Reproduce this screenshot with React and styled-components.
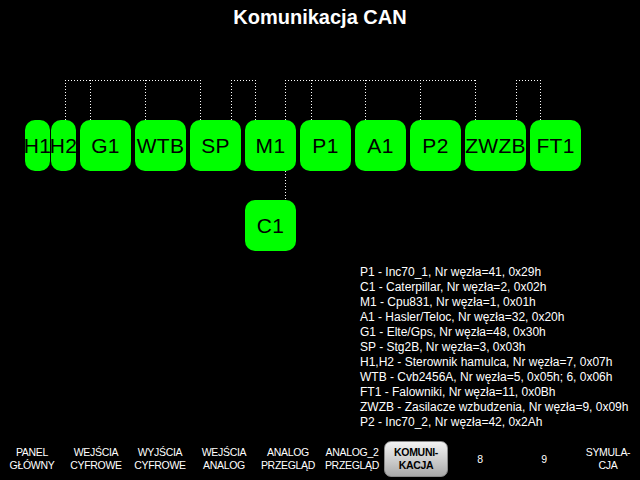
import React from "react";
import styled, { createGlobalStyle } from "styled-components";

const Global = createGlobalStyle`
  html, body { margin: 0; padding: 0; background: #000; }
  body { font-family: "Liberation Sans", Arial, sans-serif; }
`;

const Screen = styled.div`
  width: 640px;
  height: 480px;
  background: #000;
  display: flex;
  flex-direction: column;
  overflow: hidden;
`;

const Title = styled.h1`
  margin: 0;
  height: 40px;
  box-sizing: border-box;
  padding-top: 6px;
  font-size: 20px;
  line-height: 23px;
  font-weight: bold;
  color: #fff;
  text-align: center;
`;

const Diagram = styled.div`
  position: relative;
  height: 222px;
  flex: none;
`;

const Wires = styled.svg`
  position: absolute;
  left: 0;
  top: 0;
`;

const Node = styled.div`
  position: absolute;
  height: 51px;
  background: #00ff00;
  border-radius: 10px;
  display: flex;
  align-items: center;
  justify-content: center;
  color: #000;
  font-size: 21px;
  letter-spacing: 0.3px;
  white-space: nowrap;
`;

const Legend = styled.div`
  margin: 3px 0 0 360px;
  color: #fff;
  font-size: 12px;
  line-height: 15px;
`;

const Nav = styled.nav`
  margin-top: auto;
  margin-bottom: 3px;
  height: 36px;
  display: grid;
  grid-template-columns: repeat(10, 64px);
`;

const NavItem = styled.div`
  display: flex;
  align-items: center;
  justify-content: center;
  text-align: center;
  font-size: 10.5px;
  line-height: 13px;
  letter-spacing: -0.3px;
  color: ${(p) => (p.$active ? "#000" : "#fff")};
  font-weight: ${(p) => (p.$active ? "bold" : "normal")};
  border-radius: 7px;
  box-sizing: border-box;
  ${(p) =>
    p.$active &&
    `
    background: linear-gradient(#f2f2f2, #c8c8c8 60%, #a9a9a9);
    border: 1px solid #8a8a8a;
  `}
`;

const nodes = [
  ["H1", 25, 120, 25],
  ["H2", 51, 120, 25],
  ["G1", 80, 120, 51],
  ["WTB", 135, 120, 51],
  ["SP", 190, 120, 51],
  ["M1", 245, 120, 51],
  ["P1", 300, 120, 51],
  ["A1", 355, 120, 51],
  ["P2", 410, 120, 51],
  ["ZWZB", 465, 120, 61],
  ["FT1", 530, 120, 51],
  ["C1", 245, 200, 51],
];

const OFF = 40;
const hLines = [
  [65, 200],
  [231, 255],
  [285, 475],
  [516, 540],
];
const vLines = [65, 90, 145, 200, 231, 255, 285, 311, 365, 420, 475, 516, 540];

const legend = [
  "P1 - Inc70_1, Nr węzła=41, 0x29h",
  "C1 - Caterpillar, Nr węzła=2, 0x02h",
  "M1 - Cpu831, Nr węzła=1, 0x01h",
  "A1 - Hasler/Teloc, Nr węzła=32, 0x20h",
  "G1 - Elte/Gps, Nr węzła=48, 0x30h",
  "SP - Stg2B, Nr węzła=3, 0x03h",
  "H1,H2 - Sterownik hamulca, Nr węzła=7, 0x07h",
  "WTB - Cvb2456A, Nr węzła=5, 0x05h; 6, 0x06h",
  "FT1 - Falowniki, Nr węzła=11, 0x0Bh",
  "ZWZB - Zasilacze wzbudzenia, Nr węzła=9, 0x09h",
  "P2 - Inc70_2, Nr węzła=42, 0x2Ah",
];

const nav = [
  ["PANEL", "GŁÓWNY"],
  ["WEJŚCIA", "CYFROWE"],
  ["WYJŚCIA", "CYFROWE"],
  ["WEJŚCIA", "ANALOG"],
  ["ANALOG", "PRZEGLĄD"],
  ["ANALOG_2", "PRZEGLĄD"],
  ["KOMUNI-", "KACJA"],
  ["8"],
  ["9"],
  ["SYMULA-", "CJA"],
];

export default function App() {
  return (
    <Screen>
      <Global />
      <Title>Komunikacja CAN</Title>
      <Diagram>
        <Wires width="640" height="222">
          <g stroke="#fff" strokeWidth="1" strokeDasharray="1 2" fill="none">
            {hLines.map(([a, b], i) => (
              <line key={"h" + i} x1={a} y1={80 - OFF + 0.5} x2={b + 1} y2={80 - OFF + 0.5} />
            ))}
            {vLines.map((x, i) => (
              <line key={"v" + i} x1={x + 0.5} y1={80 - OFF} x2={x + 0.5} y2={120 - OFF} />
            ))}
            <line x1={285.5} y1={171 - OFF} x2={285.5} y2={200 - OFF} />
          </g>
        </Wires>
        {nodes.map(([label, x, y, w]) => (
          <Node key={label} style={{ left: x, top: y - OFF, width: w }}>
            {label}
          </Node>
        ))}
      </Diagram>
      <Legend>
        {legend.map((l) => (
          <div key={l}>{l}</div>
        ))}
      </Legend>
      <Nav>
        {nav.map((lines, i) => (
          <NavItem key={i} $active={i === 6}>
            <div>
              {lines.map((t, j) => (
                <div key={j}>{t}</div>
              ))}
            </div>
          </NavItem>
        ))}
      </Nav>
    </Screen>
  );
}
